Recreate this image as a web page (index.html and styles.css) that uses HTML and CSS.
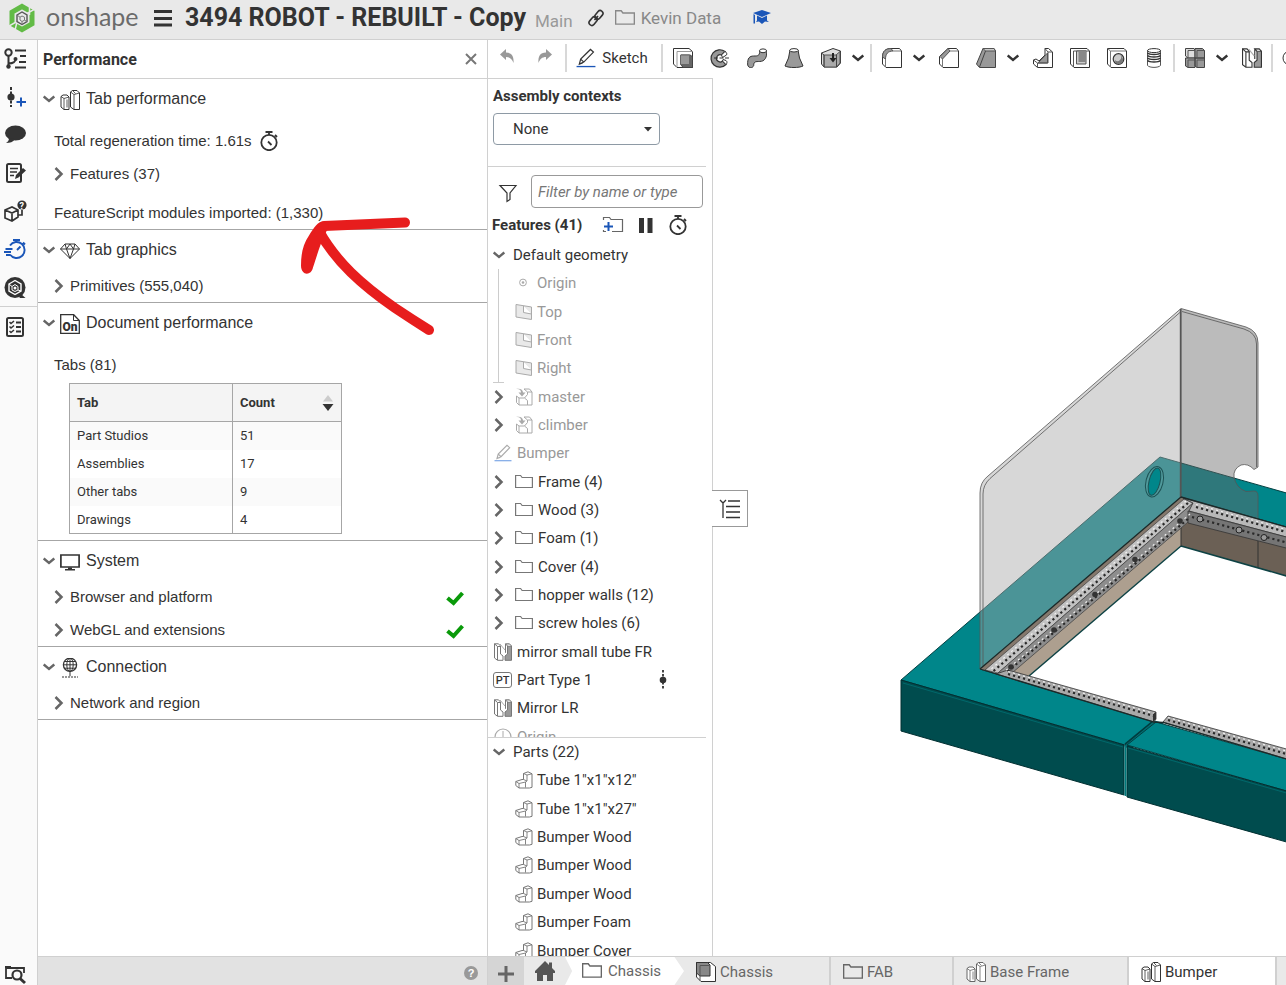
FILE: index.html
```html
<!DOCTYPE html>
<html lang="en">

<head>
    <meta charset="UTF-8">
    <meta name="viewport" content="width=device-width, initial-scale=1.0">
    <title>3494 ROBOT - REBUILT - Copy</title>
    <link rel="stylesheet" href="styles.css">
</head>

<body>
    <!-- Icon set -->
    <svg class="sprite" aria-hidden="true">
        <symbol id="i-down" viewBox="0 0 12 14"><path d="M0.700 4.500L6 9l5.300-4.500" fill="none" stroke="currentColor" stroke-width="2.400"/></symbol>
        <symbol id="i-right" viewBox="0 0 12 14"><path d="M2.500 1L8.500 7l-6 6" fill="none" stroke="currentColor" stroke-width="2.500"/></symbol>
        <symbol id="i-folder" viewBox="0 0 18 18"><path d="M.600 14.500v-12h5l1.500 2h10.300v10z" fill="none" stroke="currentColor" stroke-width="1.200"/></symbol>
        <symbol id="i-plane" viewBox="0 0 18 18"><path d="M1 1.500l15.500 2.500v12.500L1 14zM8.500 3v6.500l8 1.500" fill="#e9e9e9" stroke="currentColor"/></symbol>
        <symbol id="i-origin" viewBox="0 0 18 18"><circle cx="8" cy="8.500" r="3.400" fill="none" stroke="currentColor"/><circle cx="8" cy="8.500" r="1.300" fill="currentColor"/></symbol>
        <symbol id="i-derived" viewBox="0 0 18 18"><path d="M1.500 8v6.500L4 17h13V4l-2.500-3H9M1.500 8L4 10h5.500l3-3.500V4L9 1M4 10v7M12.500 4H17M9.500 10l3 2.500V17" fill="none" stroke="currentColor"/><path d="M1 1c3.500-.5 5 1 5 3.500H3.500L7 8.500l3.500-4H8C8 1.500 5 0 1 1z" fill="currentColor"/></symbol>
        <symbol id="i-pencil" viewBox="0 0 18 18"><path d="M3 14.500l1.200-4.500L13 1.300l2.700 2.400L7 12.700zM4.200 10l2.800 2.700M3 14.500l3-1" fill="none" stroke="currentColor" stroke-width="1.100"/><path d="M0.500 16.700h17" stroke="var(--line, #1b56b8)" stroke-width="1.200"/></symbol>
        <symbol id="i-mirror" viewBox="0 0 18 18"><path d="M.500.800h4L6.500 3v8l2.500 2v4.300H3.500L.500 15z" fill="#fff" stroke="currentColor"/><path d="M.500.800L3.500 3.500v13.500M3.500 3.500h3" fill="none" stroke="currentColor"/><path d="M17.500 3h-4v8L11 13v4.300h6.500z" fill="#999" stroke="currentColor"/><path d="M13.500 3L11.500.800h4L17.500 3M11.500.800v9" fill="#ddd" stroke="currentColor"/><path d="M6 1l5 6" stroke="#aaa"/></symbol>
        <symbol id="i-part" viewBox="0 0 18 18"><path d="M.800 10.500L7 8.500h1.500v-6L13 .800l4 2v13.500l-2.500.700H4L.800 14.500z" fill="#fff" stroke="currentColor"/><path d="M.800 10.500L4 12.500V17M4 12.500l6.500-1.500 1.500-1V4L8.500 2.500M12 4l5-1.200M8.500 8.500L12 10M10.500 11v5.500" fill="none" stroke="currentColor" stroke-width="0.900"/></symbol>
        <symbol id="i-csys" viewBox="0 0 18 18"><circle cx="9" cy="9" r="8" fill="none" stroke="currentColor" stroke-width="1.200"/><path d="M9 3v7h7M9 10l-5 4" fill="none" stroke="currentColor"/></symbol>
        <symbol id="i-roll" viewBox="0 0 20 20"><path d="M10 0v20" stroke="#333" stroke-width="1.800" stroke-dasharray="2.500 1.500"/><circle cx="10" cy="10" r="3.300" fill="#333"/></symbol>
        <symbol id="i-watch" viewBox="0 0 20 20"><circle cx="10" cy="11.500" r="7.700" fill="none" stroke="currentColor" stroke-width="1.800"/><path d="M6.500 1h7M10 1v3M16 4l2 2M9 10.500l3.500 3.500" stroke="currentColor" stroke-width="1.800"/></symbol>
        <symbol id="i-studio" viewBox="0 0 20 20"><path d="M1 6.500L3 5h4l2 2v12.500H4L1 17z" fill="#fff" stroke="currentColor"/><path d="M1 6.500l3 2v11M4 8.500L9 7M7 9.500v8" fill="none" stroke="currentColor" stroke-width="0.800"/><path d="M10.500 2l2-1.500H17l2.500 2.500v16.500h-5.500L10.500 17z" fill="#fff" stroke="currentColor"/><path d="M10.500 2L14 4.500v15M14 4.500L19.500 3M12.500.500l3 3" fill="none" stroke="currentColor" stroke-width="0.800"/></symbol>
        <symbol id="i-gem" viewBox="0 0 20 20"><path d="M5 3h10l4.500 5L10 17.500.500 8zM.500 8h19M5 3l1.500 5L10 17.500 13.500 8 15 3M6.500 8L10 3l3.500 5" fill="none" stroke="currentColor"/></symbol>
        <symbol id="i-doc" viewBox="0 0 20 20"><path d="M.700.700h13L19.300 6.500v12.800H.700z" fill="none" stroke="currentColor" stroke-width="1.300"/><path d="M13.500 1v5.500H19" fill="none" stroke="currentColor"/><text x="2.500" y="17" font-family="Roboto, sans-serif" font-size="12" font-weight="900" fill="currentColor">On</text></symbol>
        <symbol id="i-monitor" viewBox="0 0 20 20"><path d="M.900 3h18.200v12H.900z" fill="none" stroke="currentColor" stroke-width="1.700"/><path d="M8 15.500h4V17h3v1.500H5V17h3z" fill="currentColor"/></symbol>
        <symbol id="i-globe" viewBox="0 0 20 20"><g fill="none" stroke="currentColor"><circle cx="10" cy="6.800" r="6.600" stroke-width="1.300"/><ellipse cx="10" cy="6.800" rx="3.200" ry="6.600"/><path d="M10 .200v18M3.200 6.800h13.600M4.500 3.500h11M4.500 10.200h11"/><path d="M2 19h16" stroke-dasharray="2 1"/></g></symbol>
        <symbol id="i-check" viewBox="0 0 20 20"><path d="M2.500 10l6 5L17.500 5" fill="none" stroke="#0a9a0a" stroke-width="4"/></symbol>
    </svg>

    <header class="topbar">
        <a class="logo" href="#">
            <svg width="28" height="32" viewBox="0 0 28 32" aria-hidden="true">
                <path d="M14 4.500l10 5.700v11.600l-10 5.700-10-5.700V10.200z" fill="none" stroke="#62bb46" stroke-width="5"/>
                <path d="M19 11.500l9-5M21.500 13V4M0 24.500l9-5M9 20l-2 8" stroke="#e9e9e9" stroke-width="1.500"/>
                <path d="M9 13l5-3 5 3v6.500l-5 3-5-3z" fill="none" stroke="#555" stroke-width="1.400"/>
                <path d="M12 15.200l2-1.200 2.500 1.200v3L14 19.500 12 18zM9 13l3 2.200M19 19.500l-2.500-1.300M14 22.500v-3" fill="none" stroke="#777"/>
            </svg>
            <span>onshape</span>
        </a>
        <button class="menu" aria-label="Menu"><svg width="18" height="18" viewBox="0 0 18 18"><path d="M0 2.500h18M0 9.500h18M0 16h18" stroke="#333" stroke-width="3"/></svg></button>
        <h1>3494 ROBOT - REBUILT - Copy</h1>
        <span class="branch">Main</span>
        <button class="link" aria-label="Share link"><svg width="18" height="18" viewBox="0 0 18 18"><g fill="none" stroke="#333" stroke-width="1.600"><rect x="7" y="3" width="9.500" height="5.500" rx="2.700" transform="rotate(-50 12 5.700)"/><rect x="1.500" y="9.500" width="9.500" height="5.500" rx="2.700" transform="rotate(-50 6 12.300)"/><path d="M7.500 11l3.500-4"/></g></svg></button>
        <a class="location" href="#"><svg width="20" height="20"><use href="#i-folder"/></svg>Kevin Data</a>
        <svg class="edu" width="18" height="18" viewBox="0 0 18 18"><path d="M9 1l9 3L9 8 0 4zM4 6.500l5 2.500 5-2.500v5l2 1.500-4-.5L9 15l-3-2.500-3 .5 1-1.500zM.500 5l1.500 1v8.500H.500z" fill="#1b56b8"/></svg>
    </header>

    <div class="layout">
        <nav class="rail" aria-label="Panels">
            <button aria-label="Versions"><svg width="24" height="24" viewBox="0 0 24 24"><g fill="none" stroke="#333" stroke-width="2"><circle cx="5.500" cy="5.500" r="3.200"/><path d="M5.500 9v10M5.500 16.500c6 0 7-2 7-5M12 3.500h11M17 9h6M16 15h7M12 20.500h11"/></g><circle cx="5.500" cy="19.500" r="2.200" fill="#333"/><circle cx="12.500" cy="12" r="2" fill="#333"/></svg></button>
            <button aria-label="Insert"><svg width="24" height="24" viewBox="0 0 24 24"><path d="M8 2v20" stroke="#333" stroke-width="2" stroke-dasharray="3 1.500"/><circle cx="8" cy="12" r="3.600" fill="#333"/><path d="M13.500 17h9.500M18 12.500v9" stroke="#1b56b8" stroke-width="2"/></svg></button>
            <button aria-label="Comments"><svg width="24" height="24" viewBox="0 0 24 24"><ellipse cx="12.500" cy="10" rx="10.500" ry="7.500" fill="#333"/><path d="M6 15c0 2-1 4-3 5 4 0 7-1 9-4z" fill="#333"/></svg></button>
            <button aria-label="Notes"><svg width="24" height="24" viewBox="0 0 24 24"><rect x="4" y="3" width="14" height="18" rx="1.500" fill="none" stroke="#333" stroke-width="2"/><path d="M7 7.500h8M7 11h7M7 14.500h4" stroke="#333" stroke-width="1.500"/><path d="M12 18l1-4L20 7l3 2.500-7.500 7z" fill="#333"/></svg></button>
            <button aria-label="Properties"><svg width="24" height="24" viewBox="0 0 24 24"><path d="M2 11l7-3 6 3v7l-6 4-7-3zM2 11l7 3 6-3M9 14v8M15 16h4v-5" fill="none" stroke="#333" stroke-width="1.700"/><circle cx="19" cy="6" r="4.600" fill="#333"/><text x="16.500" y="9.500" font-family="Roboto, sans-serif" font-size="9" font-weight="700" fill="#fff">?</text></svg></button>
            <button aria-label="Performance"><svg width="24" height="24" viewBox="0 0 24 24"><path d="M7 8.500a8 8 0 1 1 0 9M10 3h7M13.500 3v3M20 5.500l2 2M14 13l3.500-3.500M2.500 12h7M1 15h7M3 18h4" fill="none" stroke="#1b56b8" stroke-width="1.900"/></svg></button>
            <button aria-label="Learning"><svg width="24" height="24" viewBox="0 0 24 24"><circle cx="12" cy="12.500" r="10.500" fill="#333"/><path d="M17.500 18.500l5 4.500h-6z" fill="#333"/><path d="M6 9l6-3.500L18 9v7l-6 3.500L6 16z" fill="none" stroke="#fff" stroke-width="1.400"/><path d="M9 11.500l3-2 3 2V15l-3 1.500L9 15zM6 9l3 2.500M18 16l-3-1" fill="none" stroke="#fff"/><circle cx="12" cy="13" r="1.500" fill="#fff"/></svg></button>
            <button class="split" aria-label="Checklist"><svg width="24" height="24" viewBox="0 0 24 24"><rect x="4" y="3" width="16" height="18" rx="1.500" fill="none" stroke="#333" stroke-width="2"/><path d="M13 7.500h5M13 12h5M13 16.500h5" stroke="#333" stroke-width="2"/><path d="M6.500 7l1.500 1.500L11 6M6.500 11.500L8 13l3-2.500M6.500 16L8 17.500l3-2.500" fill="none" stroke="#333" stroke-width="1.500"/></svg></button>
            <button class="last" aria-label="Search"><svg width="24" height="24" viewBox="0 0 24 24"><path d="M9 16H3V6h18v5M2 5h6" fill="none" stroke="#333" stroke-width="1.800"/><circle cx="14" cy="13" r="4.500" fill="#fafafa" stroke="#333" stroke-width="2.200"/><path d="M17 16.500l5 4.500" stroke="#333" stroke-width="3"/></svg></button>
        </nav>

        <section class="performance">
            <div class="panel-title">
                <h2>Performance</h2>
                <button aria-label="Close"><svg width="12" height="12" viewBox="0 0 12 12"><path d="M1 1l10 10M11 1L1 11" stroke="#777" stroke-width="2"/></svg></button>
            </div>

            <div class="group">
                <h3><svg class="arrow"><use href="#i-down"/></svg><svg class="kind"><use href="#i-studio"/></svg>Tab performance</h3>
                <p class="note">Total regeneration time: 1.61s <svg class="watch"><use href="#i-watch"/></svg></p>
                <a class="more" href="#"><svg class="arrow"><use href="#i-right"/></svg>Features (37)</a>
                <p class="note">FeatureScript modules imported: (1,330)</p>
            </div>
            <div class="group">
                <h3><svg class="arrow"><use href="#i-down"/></svg><svg class="kind"><use href="#i-gem"/></svg>Tab graphics</h3>
                <a class="more" href="#"><svg class="arrow"><use href="#i-right"/></svg>Primitives (555,040)</a>
            </div>
            <div class="group">
                <h3><svg class="arrow"><use href="#i-down"/></svg><svg class="kind"><use href="#i-doc"/></svg>Document performance</h3>
                <p class="note">Tabs (81)</p>
                <table>
                    <thead>
                        <tr>
                            <th scope="col">Tab</th>
                            <th scope="col"><span class="sort">Count <svg width="12" height="18" viewBox="0 0 12 18"><path d="M1 7.500L6 1l5 6.500z" fill="#ccc"/><path d="M0.500 10h11L6 17z" fill="#333"/></svg></span></th>
                        </tr>
                    </thead>
                    <tbody>
                        <tr><td>Part Studios</td><td>51</td></tr>
                        <tr><td>Assemblies</td><td>17</td></tr>
                        <tr><td>Other tabs</td><td>9</td></tr>
                        <tr><td>Drawings</td><td>4</td></tr>
                    </tbody>
                </table>
            </div>
            <div class="group">
                <h3><svg class="arrow"><use href="#i-down"/></svg><svg class="kind"><use href="#i-monitor"/></svg>System</h3>
                <a class="more" href="#"><svg class="arrow"><use href="#i-right"/></svg>Browser and platform<svg class="ok"><use href="#i-check"/></svg></a>
                <a class="more" href="#"><svg class="arrow"><use href="#i-right"/></svg>WebGL and extensions<svg class="ok"><use href="#i-check"/></svg></a>
            </div>
            <div class="group">
                <h3><svg class="arrow"><use href="#i-down"/></svg><svg class="kind"><use href="#i-globe"/></svg>Connection</h3>
                <a class="more" href="#"><svg class="arrow"><use href="#i-right"/></svg>Network and region</a>
            </div>

            <div class="panel-foot"><button aria-label="Help">?</button></div>

            <!-- Hand-drawn arrow -->
            <svg class="scribble" width="140" height="125" viewBox="298 214 140 125" aria-hidden="true">
                <path d="M405 222.500L324 226" fill="none" stroke="#e71d1d" stroke-width="10" stroke-linecap="round"/>
                <path d="M323 221.500c-5 0-9 6-14 14-6 9-8 18-8 30 0 10 10 11 12 2 3-9 5-16 8-24l8-18z" fill="#e71d1d"/>
                <path d="M319 231C336 262 362 285 395 308c12 8 26 17 34 22" fill="none" stroke="#e71d1d" stroke-width="10" stroke-linecap="round" stroke-linejoin="round"/>
            </svg>
        </section>

        <main class="work">
            <div class="toolbar">
                <button class="history" aria-label="Undo"><svg viewBox="0 0 20 20"><path d="M3 6.500L9 1v3.500c6 0 8 4 7.500 10.500C15 11 13 9 9 9v3z" fill="#999"/></svg></button>
                <button class="history" aria-label="Redo"><svg viewBox="0 0 20 20"><path d="M17 6.500L11 1v3.500C5 4.500 3 8.500 3.500 15 5 11 7 9 11 9v3z" fill="#999"/></svg></button>
                <span class="sep"></span>
                <button class="sketch"><svg><use href="#i-pencil"/></svg>Sketch</button>
                <span class="sep"></span>
                <button aria-label="Extrude"><svg viewBox="0 0 20 20"><g fill="#fff" stroke="#333"><path d="M.500.500h15.500l3.500 3v16h-15.500l-3.500-3.500z"/><path d="M4 19V3.500h15.500" fill="none" stroke="#999"/><path d="M8 7h9.500l2 2v10.500H10l-2-3z" fill="#666" stroke="#444"/><path d="M7.500 7h9v9.500h-9z" fill="#999" stroke="#666"/></g></svg></button>
                <button aria-label="Revolve"><svg viewBox="0 0 20 20"><path d="M15 3.500a8.700 8.700 0 1 0 1 13l-3.500-3.500a3.600 3.600 0 1 1-1-6z" fill="#999" stroke="#333" stroke-width="1.200"/><path d="M11.500 7L15 3.500c2 1 2 2.500 1.500 3.500l-4 2.500zM12.500 13l3.500 3.500c1-1 1.500-3 0-4l-3-1z" fill="#fff" stroke="#333"/><path d="M4 10h16" stroke="#333" stroke-dasharray="4 1.500"/></svg></button>
                <button aria-label="Sweep"><svg viewBox="0 0 20 20"><path d="M0.700 17c-.5-7 2-9 6-9 4 0 6 0 6-5l7-.5c.5 7-2 11-7 11-4 0-6 0-6 4-1 3-5 3-6-.5z" fill="#999" stroke="#333"/><ellipse cx="16" cy="2.800" rx="3.500" ry="1.900" fill="#fff" stroke="#333"/></svg></button>
                <button aria-label="Loft"><svg viewBox="0 0 20 20"><path d="M6 2L4.500 10 1 18c4 2 14 2 18 0l-3.500-8L14 2z" fill="#999" stroke="#333"/><ellipse cx="10" cy="2.300" rx="4.300" ry="1.700" fill="#fff" stroke="#333"/></svg></button>
                <button aria-label="Thicken"><svg viewBox="0 0 20 20"><path d="M.500 5L12 .500 19.500 3v12L16 19H3L.500 16z" fill="#ddd" stroke="#333"/><path d="M3 7h12l4-3.500V15l-3.500 4H3z" fill="#aaa" stroke="#555"/><path d="M.500 5L3 7v12M15.500 7v12" fill="none" stroke="#444"/><path d="M12 5v7" stroke="#222" stroke-width="2"/><path d="M8.500 10h7L12 14.500z" fill="#222"/></svg></button>
                <button class="drop" aria-label="More shapes"><svg><use href="#i-down"/></svg></button>
                <span class="sep"></span>
                <button aria-label="Fillet"><svg viewBox="0 0 20 20"><path d="M.500 9C.500 3 4 .500 9 .500h8.500l2 2.500v16.500H4L.500 16z" fill="#fff" stroke="#333"/><path d="M.500 9C.500 3 4 .500 9 .500L11 3C6 3 3.500 6 3.500 11z" fill="#999" stroke="#555"/><path d="M11 3h8M3.500 11v8" stroke="#777"/></svg></button>
                <button class="drop" aria-label="More fillets"><svg><use href="#i-down"/></svg></button>
                <button aria-label="Chamfer"><svg viewBox="0 0 20 20"><path d="M.500 8.500L9 .500h8.500l2 2.500v16.500H4L.500 16z" fill="#fff" stroke="#333"/><path d="M1 8.500L9 .500 11 3l-7.500 8z" fill="#999" stroke="#555"/><path d="M11 3h8M3.500 11v8" stroke="#777"/></svg></button>
                <button aria-label="Draft"><svg viewBox="0 0 20 20"><path d="M.500 16L7 .500h11l1.500 2.500v16.500H3.500z" fill="#999" stroke="#444"/><path d="M7 .500h11l1.500 2.500H9.500z" fill="#ccc" stroke="#555"/><path d="M9.500 3l-6 16" stroke="#444"/></svg></button>
                <button class="drop" aria-label="More drafts"><svg><use href="#i-down"/></svg></button>
                <button aria-label="Rib"><svg viewBox="0 0 20 20"><path d="M.500 12L3 11l3 2 6-6V.500h3.500l4 3.500v15.500H4.500L.500 16z" fill="#fff" stroke="#333"/><path d="M6 14l8.500-9v10H5z" fill="#999" stroke="#555"/><path d="M12 .500L15 4v11H4.500v4M15 4h4.500M.500 12l4 3" fill="none" stroke="#555"/></svg></button>
                <button aria-label="Shell"><svg viewBox="0 0 20 20"><path d="M.500.500H17l2.500 2.500v16.500H4L.500 16z" fill="#fff" stroke="#333"/><path d="M3.500 19V3H19" fill="none" stroke="#555"/><path d="M6.500 3h9.500v13H6.500z" fill="#ccc" stroke="#555"/><path d="M8.500 3H16v11H8.500z" fill="#888"/></svg></button>
                <button aria-label="Hole"><svg viewBox="0 0 20 20"><path d="M.500.500H17l2.500 2.500v16.500H4L.500 16z" fill="#fff" stroke="#333"/><path d="M3.500 19V3H19M.500.500L3.500 3" fill="none" stroke="#777"/><circle cx="11.500" cy="11" r="5.300" fill="#ccc" stroke="#333" stroke-width="1.200"/><path d="M13 7a3 3 0 1 1-5 5 4 4 0 0 0 8 0c0-2-1-4-3-5z" fill="#777"/></svg></button>
                <button aria-label="Thread"><svg viewBox="0 0 20 20"><path d="M3.500 2.500v15c2 2.500 11 2.500 13 0v-15z" fill="#fff" stroke="#555"/><path d="M3.500 5c2 2 11 2 13 0M3.500 7.500c2 2 11 2 13 0M3.500 10c2 2 11 2 13 0M3.500 12.500c2 2 11 2 13 0" fill="none" stroke="#333" stroke-width="1.500"/><ellipse cx="10" cy="2.600" rx="6.500" ry="2" fill="#fff" stroke="#333"/></svg></button>
                <span class="sep"></span>
                <button aria-label="Pattern"><svg viewBox="0 0 20 20"><g fill="#999" stroke="#444"><path d="M.500.500H9l1 2v7.500H3L.500 8z" fill="#ddd"/><path d="M10 .500h7.500l2 2V10H10zM.500 10H10v9.500H3L.500 18zM10 10h9.500v9.500H12L10 18z"/><path d="M3 10V2.500h7M12 10V2.500h7.500M3 19.500V12h7M12 19.500V12h7.500" fill="none" stroke="#555"/></g></svg></button>
                <button class="drop" aria-label="More patterns"><svg><use href="#i-down"/></svg></button>
                <button aria-label="Mirror"><svg><use href="#i-mirror"/></svg></button>
                <span class="sep"></span>
                <button class="cut" aria-label="Boolean"><svg viewBox="0 0 20 20"><circle cx="8" cy="10" r="7" fill="#fff" stroke="#333"/></svg></button>
            </div>

            <div class="studio">
                <aside class="features">
                    <div class="contexts">
                        <label for="context">Assembly contexts</label>
                        <div class="select">
                            <select id="context"><option>None</option></select>
                            <svg width="8" height="5" viewBox="0 0 8 5"><path d="M0 0h8L4 4.500z" fill="#333"/></svg>
                        </div>
                    </div>
                    <div class="filter">
                        <label for="filter" aria-label="Filter"><svg width="20" height="20" viewBox="0 0 20 20"><path d="M2 2.500h16L12 10v6.500l-3 2V10z" fill="none" stroke="#333" stroke-width="1.200"/></svg></label>
                        <input id="filter" type="text" placeholder="Filter by name or type">
                    </div>
                    <div class="features-head">
                        <h2>Features (41)</h2>
                        <button aria-label="Add folder"><svg width="22" height="20" viewBox="0 0 22 20"><path d="M1.500 5V2.500h6l1.500 2h11.500v12H10M1.500 15v1.500H4" fill="none" stroke="#666" stroke-width="1.200"/><path d="M2 11.500h9M6.500 7v9" stroke="#1b56b8" stroke-width="2"/></svg></button>
                        <button aria-label="Pause"><svg width="20" height="20" viewBox="0 0 20 20"><path d="M3 3h5v15H3zM11.500 3h5v15h-5z" fill="#333"/></svg></button>
                        <button aria-label="Regeneration times"><svg width="20" height="20"><use href="#i-watch"/></svg></button>
                    </div>
                    <div class="tree-view">
                        <ul class="tree">
                            <li><button class="caret" aria-label="Collapse"><svg><use href="#i-down"/></svg></button><span class="head">Default geometry</span></li>
                            <li class="nested">
                                <ul>
                                    <li><svg class="icon"><use href="#i-origin"/></svg>Origin</li>
                                    <li><svg class="icon"><use href="#i-plane"/></svg>Top</li>
                                    <li><svg class="icon"><use href="#i-plane"/></svg>Front</li>
                                    <li><svg class="icon"><use href="#i-plane"/></svg>Right</li>
                                </ul>
                            </li>
                            <li class="dim"><button class="caret" aria-label="Expand"><svg><use href="#i-right"/></svg></button><svg class="icon"><use href="#i-derived"/></svg>master</li>
                            <li class="dim"><button class="caret" aria-label="Expand"><svg><use href="#i-right"/></svg></button><svg class="icon"><use href="#i-derived"/></svg>climber</li>
                            <li class="dim"><svg class="icon"><use href="#i-pencil"/></svg>Bumper</li>
                            <li><button class="caret" aria-label="Expand"><svg><use href="#i-right"/></svg></button><svg class="icon"><use href="#i-folder"/></svg>Frame (4)</li>
                            <li><button class="caret" aria-label="Expand"><svg><use href="#i-right"/></svg></button><svg class="icon"><use href="#i-folder"/></svg>Wood (3)</li>
                            <li><button class="caret" aria-label="Expand"><svg><use href="#i-right"/></svg></button><svg class="icon"><use href="#i-folder"/></svg>Foam (1)</li>
                            <li><button class="caret" aria-label="Expand"><svg><use href="#i-right"/></svg></button><svg class="icon"><use href="#i-folder"/></svg>Cover (4)</li>
                            <li><button class="caret" aria-label="Expand"><svg><use href="#i-right"/></svg></button><svg class="icon"><use href="#i-folder"/></svg>hopper walls (12)</li>
                            <li><button class="caret" aria-label="Expand"><svg><use href="#i-right"/></svg></button><svg class="icon"><use href="#i-folder"/></svg>screw holes (6)</li>
                            <li><svg class="icon"><use href="#i-mirror"/></svg>mirror small tube FR</li>
                            <li><span class="pt">PT</span>Part Type 1<svg class="roll"><use href="#i-roll"/></svg></li>
                            <li><svg class="icon"><use href="#i-mirror"/></svg>Mirror LR</li>
                            <li class="dim"><svg class="icon"><use href="#i-csys"/></svg>Origin</li>
                        </ul>
                    </div>
                    <div class="parts">
                        <h2><button class="caret" aria-label="Collapse"><svg><use href="#i-down"/></svg></button><span class="head">Parts (22)</span></h2>
                        <ul>
                            <li><svg class="icon"><use href="#i-part"/></svg>Tube 1"x1"x12"</li>
                            <li><svg class="icon"><use href="#i-part"/></svg>Tube 1"x1"x27"</li>
                            <li><svg class="icon"><use href="#i-part"/></svg>Bumper Wood</li>
                            <li><svg class="icon"><use href="#i-part"/></svg>Bumper Wood</li>
                            <li><svg class="icon"><use href="#i-part"/></svg>Bumper Wood</li>
                            <li><svg class="icon"><use href="#i-part"/></svg>Bumper Foam</li>
                            <li><svg class="icon"><use href="#i-part"/></svg>Bumper Cover</li>
                        </ul>
                    </div>
                </aside>

                <div class="viewer">
                    <svg class="model" viewBox="713 78 573 878" preserveAspectRatio="xMinYMin slice" role="img" aria-label="Bumper model">
                        <!-- Bumper cover, top faces -->
                        <path d="M1124 746L1152 720L1164 723L1130 750z" fill="#006d70"/>
                        <path d="M901 680L1160 457L1290 494V528L1181 497L980 669L1153 721L1125 745z" fill="#00868a" stroke="#043f41"/>
                        <path d="M1127 745L1156 722L1290 760V792z" fill="#00868a" stroke="#043f41"/>
                        <path d="M901 680L1124 745V795L901 731z" fill="#004c4e" stroke="#002f31"/>
                        <path d="M1127 746L1290 792V843L1127 797z" fill="#004c4e" stroke="#002f31"/>
                        <path d="M1125.500 746V796" stroke="#00787b" stroke-width="2"/>
                        <path d="M1125 744L1153 721" stroke="#003c3e" stroke-width="1.500"/>
                        <path d="M903 683L1123 747M1128 748L1290 794" stroke="#00686b"/>
                        <!-- Polycarbonate walls -->
                        <path d="M980 669V493Q980 482 988 476L1181 308.500V497z" fill="#a6a6a6" fill-opacity="0.450"/>
                        <path d="M1181 308.500L1246 327Q1258 331 1258 343V467L1254 469.500Q1248 463 1241 465Q1233 469 1234 477Q1236 488 1246 491.500L1254 491Q1258 491 1258 496V519L1181 497z" fill="#696969" fill-opacity="0.450"/>
                        <ellipse cx="1154.500" cy="481.700" rx="8.500" ry="15.500" transform="rotate(14 1154.500 481.700)" fill="#509a9c" stroke="#1d5254"/>
                        <ellipse cx="1154.500" cy="481.700" rx="5.500" ry="14" transform="rotate(14 1154.500 481.700)" fill="#00868a" stroke="#1d5254"/>
                        <g fill="none" stroke="#555" stroke-width="0.800">
                            <path d="M980 669V493Q980 482 988 476L1181 308.500"/>
                            <path d="M983 669V494Q983 485 990 478.500L1181 311.500"/>
                            <path d="M1181 308.500L1246 327Q1258 331 1258 343V467L1254 469.500Q1248 463 1241 465Q1233 469 1234 477Q1236 488 1246 491.500L1254 491Q1258 491 1258 496V567"/>
                            <path d="M1182 311.500L1244 329Q1256.500 333 1256.500 344V467"/>
                        </g>
                        <path d="M1180.700 309V497" stroke="#555" stroke-width="1.800"/>
                        <!-- Wood -->
                        <path d="M980 669L1181 497L1187 499L986 671z" fill="#85786c"/>
                        <path d="M1192 515L1181 545.500L1029 676L1000 672z" fill="#ad9f8f"/>
                        <path d="M1181 520L1290 548V577L1181 546z" fill="#6b6055"/>
                        <path d="M1181 546L1290 577M1181 546L1029 676" fill="none" stroke="#0e4244" stroke-width="1.500"/>
                        <path d="M1181 522V546M1258 540V567" stroke="#333"/>
                        <!-- Frame tubes -->
                        <path d="M1184 499L1193 503L998 673L985 670z" fill="#c2c2c2" stroke="#444" stroke-width="0.800"/>
                        <path d="M1193 503L1188 522L1012 673L998 673z" fill="#8d8d8d" stroke="#444" stroke-width="0.800"/>
                        <path d="M1183 498L1290 528V538L1189 511L1193 503z" fill="#b8b8b8" stroke="#333" stroke-width="0.800"/>
                        <path d="M1188 511L1290 538V549L1188 523z" fill="#757575" stroke="#333" stroke-width="0.800"/>
                        <path d="M1008 670L1156 712V719L1154 722L996 674z" fill="#a9a9a9" stroke="#333" stroke-width="0.800"/>
                        <path d="M1163 722L1168 716L1290 750V760z" fill="#a9a9a9" stroke="#333" stroke-width="0.800"/>
                        <g fill="none" stroke="#2a2a2a" stroke-width="2.200" stroke-dasharray="2.200 3">
                            <path d="M1188 503L993 671.500M1188 519L1007 672M1196 507L1290 533M1192 517L1290 543.500M1008 674L1154 716M1168 720L1290 755"/>
                        </g>
                        <g fill="none" stroke="#f0f0f0" stroke-width="1.200" stroke-dasharray="2 3.200">
                            <path d="M1186 501L990 670M1190 514L1004 672M1196 504.500L1290 530.500M1008 671.500L1154 713.500M1168 717.500L1290 752"/>
                        </g>
                        <g fill="#999" stroke="#222">
                            <circle cx="1200" cy="519" r="3"/><circle cx="1239" cy="530" r="3"/><circle cx="1264" cy="537.500" r="3"/>
                        </g>
                        <g fill="#333">
                            <circle cx="1180" cy="521" r="2.800"/><circle cx="1135" cy="559.500" r="2.800"/><circle cx="1095" cy="594.500" r="2.800"/><circle cx="1054" cy="630" r="2.800"/><circle cx="1011" cy="667" r="2.800"/>
                        </g>
                        <path d="M1153 714l3-2v7l-3 3z" fill="#333"/>
                        <path d="M1181 497L1290 528M980 669L1181 497M980 669L1154 722L1163 722.500L1290 760" fill="none" stroke="#1b2a2a" stroke-width="1.300"/>
                    </svg>
                    <button class="flyout" aria-label="Toggle feature list"><svg width="22" height="22" viewBox="0 0 22 22"><path d="M1 2l3 3 3-3M4 5v15M9 3h12M7 8.500h14M7 14h14M7 19.500h14" fill="none" stroke="#333" stroke-width="1.300"/></svg></button>
                </div>
            </div>

            <footer class="tabs">
                <button class="add" aria-label="Add tab"><svg width="18" height="18" viewBox="0 0 18 18"><path d="M1 9h16M9 1v16" stroke="#666" stroke-width="3"/></svg></button>
                <button class="home" aria-label="Home"><svg width="22" height="22" viewBox="0 0 22 22"><path d="M11 1l4 4V2.500h3V8l3 3v2h-2v8h-6v-6H9v6H3v-8H1v-2z" fill="#555"/></svg></button>
                <a class="crumb" href="#"><svg width="20" height="20"><use href="#i-folder"/></svg>Chassis</a>
                <a class="tab t-chassis" href="#"><svg width="20" height="20" viewBox="0 0 20 20"><path d="M.500.500h14l5 4v15H5L.500 15z" fill="#fff" stroke="#333"/><path d="M.500.500h11l2.500 2.500v11H4L.500 11z" fill="#888" stroke="#333"/><path d="M4 14V3.500h9.500M4 14v4.500" fill="none" stroke="#555"/></svg>Chassis</a>
                <a class="tab t-fab" href="#"><svg width="20" height="20"><use href="#i-folder"/></svg>FAB</a>
                <a class="tab t-base" href="#"><svg width="20" height="20"><use href="#i-studio"/></svg>Base Frame</a>
                <a class="tab t-bumper active" href="#" aria-current="page"><svg width="20" height="20"><use href="#i-studio"/></svg>Bumper</a>
            </footer>
        </main>
    </div>
</body>

</html>
```

FILE: styles.css
```css
* {
    box-sizing: border-box;
}

body {
    font-family: Roboto, "Liberation Sans", sans-serif;
    font-size: 15px;
    color: #333;
    margin: 0;
    height: 100vh;
    display: flex;
    flex-direction: column;
    overflow: hidden;
    background-color: #fff;
}

h1,
h2,
h3,
p,
ul {
    margin: 0;
    padding: 0;
}

ul {
    list-style: none;
}

a {
    color: inherit;
    text-decoration: none;
}

button {
    display: flex;
    align-items: center;
    justify-content: center;
    padding: 0;
    border: none;
    background: none;
    color: inherit;
    font: inherit;
    cursor: pointer;
}

svg {
    flex: none;
}

.sprite {
    display: none;
}

/* Top bar */
.topbar {
    display: flex;
    align-items: center;
    height: 40px;
    padding: 0 8px 4px;
    background-color: #e9e9e9;
    border-bottom: 1px solid #d0d0d0;
    white-space: nowrap;
}

.logo {
    display: flex;
    align-items: center;
    gap: 10px;
    width: 146px;
    font-family: Lato, sans-serif;
    font-size: 25px;
    line-height: 28px;
    color: #6b6b6b;
}

.logo span {
    padding-bottom: 4px;
}

h1 {
    margin-left: 13px;
    font-size: 25px;
    line-height: 34px;
}

.branch {
    margin: 6px 14px 0 9px;
    font-size: 17px;
    color: #999;
}

.location {
    display: flex;
    align-items: center;
    gap: 6px;
    margin-left: 10px;
    font-size: 17px;
    color: #888;
}

.edu {
    margin-left: 32px;
}

.layout {
    flex: 1;
    display: flex;
    min-height: 0;
}

/* Icon rail */
.rail {
    display: flex;
    flex-direction: column;
    width: 38px;
    background-color: #fafafa;
    border-right: 1px solid #d0d0d0;
}

.rail button {
    height: 38px;
    padding-right: 7px;
}

.rail .split {
    height: 40px;
    border-top: 1px solid #d0d0d0;
}

.rail .last {
    height: 22px;
    margin-top: auto;
}

/* Performance panel */
.performance {
    position: relative;
    display: flex;
    flex-direction: column;
    width: 450px;
    font-family: "Liberation Sans", Arial, sans-serif;
    border-right: 1px solid #d0d0d0;
}

.panel-title {
    display: flex;
    align-items: center;
    justify-content: space-between;
    height: 39px;
    padding: 0 10px 0 5px;
    border-bottom: 1px solid #d0d0d0;
}

.panel-title h2 {
    font-family: Roboto, sans-serif;
    font-size: 16px;
}

.group {
    border-bottom: 1px solid #a6a6a6;
}

.group h3 {
    display: flex;
    align-items: center;
    height: 39px;
    padding-left: 5px;
    font-size: 16px;
    font-weight: normal;
}

.arrow {
    width: 12px;
    height: 14px;
    color: #666;
}

.kind {
    width: 20px;
    height: 20px;
    margin: 2px 6px 0 5px;
}

.note {
    display: flex;
    align-items: center;
    gap: 7px;
    height: 33px;
    margin-top: 6px;
    padding-left: 16px;
}

.watch {
    width: 20px;
    height: 20px;
}

.more {
    display: flex;
    align-items: center;
    gap: 5px;
    height: 33px;
    padding-left: 15px;
}

.ok {
    width: 20px;
    height: 20px;
    margin: 3px 22px 0 auto;
}

table {
    width: 273px;
    margin: 2px 0 6px 31px;
    border-collapse: collapse;
    border: 1px solid #a6a6a6;
    font-family: Roboto, sans-serif;
    font-size: 13px;
}

th,
td {
    height: 28px;
    padding: 0 7px;
    text-align: left;
}

th {
    height: 38px;
    border-bottom: 1px solid #a6a6a6;
    background-color: #f4f4f4;
}

th:first-child,
td:first-child {
    width: 163px;
    border-right: 1px solid #a6a6a6;
}

tbody tr:nth-child(odd) {
    background-color: #fafafa;
}

.sort {
    display: flex;
    align-items: center;
    justify-content: space-between;
}

.panel-foot {
    display: flex;
    align-items: center;
    justify-content: flex-end;
    height: 29px;
    margin-top: auto;
    padding: 3px 9px 0;
    background-color: #e2e2e2;
    border-top: 1px solid #d0d0d0;
}

.panel-foot button {
    width: 14px;
    height: 14px;
    border-radius: 50%;
    background-color: #999;
    color: #fff;
    font-size: 11px;
    font-weight: bold;
}

.scribble {
    position: absolute;
    left: 260px;
    top: 174px;
    pointer-events: none;
}

/* Workspace */
.work {
    flex: 1;
    display: flex;
    flex-direction: column;
    min-width: 0;
}

.toolbar {
    display: flex;
    align-items: center;
    height: 38px;
    padding-bottom: 2px;
    overflow: hidden;
}

.toolbar button {
    flex: none;
    width: 37px;
    height: 28px;
}

.toolbar svg {
    width: 20px;
    height: 20px;
}

.toolbar .history {
    width: 38px;
}

.toolbar .history svg {
    width: 22px;
}

.toolbar .sketch {
    gap: 6px;
    width: 92px;
    padding-right: 4px;
    font-size: 15px;
}

.toolbar .drop {
    width: 17px;
    margin-right: 3px;
}

.toolbar .drop svg {
    width: 12px;
    height: 14px;
}

.toolbar .cut {
    justify-content: flex-start;
    padding-left: 8px;
}

.sep {
    flex: none;
    width: 2px;
    height: 28px;
    margin: 0 1px;
    background-color: #d8d8d8;
}

.studio {
    flex: 1;
    display: flex;
    min-height: 0;
}

/* Feature list */
.features {
    display: flex;
    flex-direction: column;
    width: 225px;
    padding-right: 6px;
    border-top: 1px solid #d0d0d0;
    border-right: 1px solid #d0d0d0;
    white-space: nowrap;
}

.contexts {
    padding: 8px 5px 21px;
    border-bottom: 1px solid #d0d0d0;
}

.contexts label {
    display: block;
    margin-bottom: 8px;
    line-height: 18px;
    font-weight: bold;
}

.select {
    position: relative;
    width: 167px;
}

.select select {
    display: block;
    appearance: none;
    width: 100%;
    height: 32px;
    padding: 0 19px;
    border: 1px solid #8e9aa5;
    border-radius: 4px;
    background-color: #fff;
    color: inherit;
    font: inherit;
}

.select svg {
    position: absolute;
    right: 8px;
    top: 14px;
}

.filter {
    display: flex;
    align-items: center;
    gap: 13px;
    padding: 8px 3px 0 10px;
}

.filter label {
    height: 18px;
}

.filter input {
    flex: 1;
    min-width: 0;
    height: 33px;
    padding: 0 6px;
    border: 1px solid #999;
    border-radius: 4px;
    font: inherit;
}

.filter input::placeholder {
    color: #777;
    font-style: italic;
}

.features-head {
    display: flex;
    align-items: center;
    gap: 12px;
    height: 33px;
    padding-left: 4px;
}

.features-head h2 {
    margin-right: 8px;
    font-size: 15px;
}

.tree-view {
    flex: 1 1 0;
    min-height: 0;
    overflow: hidden;
}

.tree {
    display: grid;
    grid-template-rows: repeat(18, 1fr);
    height: 510px;
}

.tree li,
.parts li,
.parts h2 {
    display: flex;
    align-items: center;
    padding-left: 6px;
}

.tree .nested {
    grid-row: span 4;
    display: block;
    position: relative;
    padding-left: 0;
    color: #999;
}

.nested ul {
    display: grid;
    grid-template-rows: repeat(4, 1fr);
    height: 100%;
}

/* guide line beside the default geometry */
.nested::before {
    content: "";
    position: absolute;
    left: 10px;
    top: 0;
    bottom: 0;
    border-left: 1px solid #ccc;
}

.nested::after {
    content: "";
    position: absolute;
    left: 5px;
    bottom: 0;
    width: 11px;
    border-bottom: 1px solid #ccc;
}

.nested li,
.parts li {
    padding-left: 27px;
}

.caret {
    width: 10px;
    color: #666;
}

.caret svg {
    width: 12px;
    height: 14px;
}

.head {
    margin-left: 9px;
}

.icon {
    width: 18px;
    height: 18px;
    margin-right: 5px;
    color: #777;
}

.nested .icon,
.parts .icon {
    margin-right: 4px;
}

.caret + .icon {
    margin-left: 11px;
}

.dim {
    color: #999;
}

.dim .icon,
.nested .icon {
    --line: #7da7e6;
    color: #aaa;
}

.pt {
    width: 19px;
    height: 16px;
    margin: 0 5px 0 -1px;
    border: 1px solid #777;
    border-radius: 3px;
    font-size: 11px;
    font-weight: 500;
    line-height: 15px;
    text-align: center;
}

.roll {
    width: 20px;
    height: 20px;
    margin: 0 33px 0 auto;
}

.parts {
    height: 219px;
    overflow: hidden;
    border-top: 1px solid #d0d0d0;
}

.parts h2 {
    height: 28px;
    font-size: 15px;
    font-weight: normal;
}

.parts ul {
    display: grid;
    grid-template-rows: repeat(7, 1fr);
    height: 199px;
}

/* Graphics area */
.viewer {
    position: relative;
    flex: 1;
    min-width: 0;
}

.model {
    display: block;
    width: 100%;
    height: 100%;
}

.flyout {
    position: absolute;
    left: -1px;
    top: 412px;
    width: 36px;
    height: 37px;
    border: 1px solid #999;
    border-left: none;
    background-color: #fff;
}

/* Document tabs */
.tabs {
    display: flex;
    height: 29px;
    overflow: hidden;
    border-top: 1px solid #d0d0d0;
    background-color: #e9e9e9;
    color: #666;
    white-space: nowrap;
}

.tabs .add {
    width: 36px;
    padding-top: 5px;
    background-color: #d5d5d5;
}

.tabs .home {
    width: 41px;
}

.crumb {
    display: flex;
    align-items: center;
    gap: 6px;
    width: 119px;
    padding-left: 17px;
    background-color: #fff;
    clip-path: polygon(0 0, 92% 0, 100% 50%, 92% 100%, 0 100%, 6% 50%);
}

.tab {
    display: flex;
    align-items: center;
    gap: 4px;
    padding: 2px 12px 0;
    border-right: 2px solid #d0d0d0;
}

.t-chassis {
    width: 147px;
}

.t-fab {
    width: 123px;
}

.t-base {
    width: 175px;
}

.t-bumper {
    width: 148px;
}

.tab.active {
    background-color: #fff;
    color: #333;
}
```
